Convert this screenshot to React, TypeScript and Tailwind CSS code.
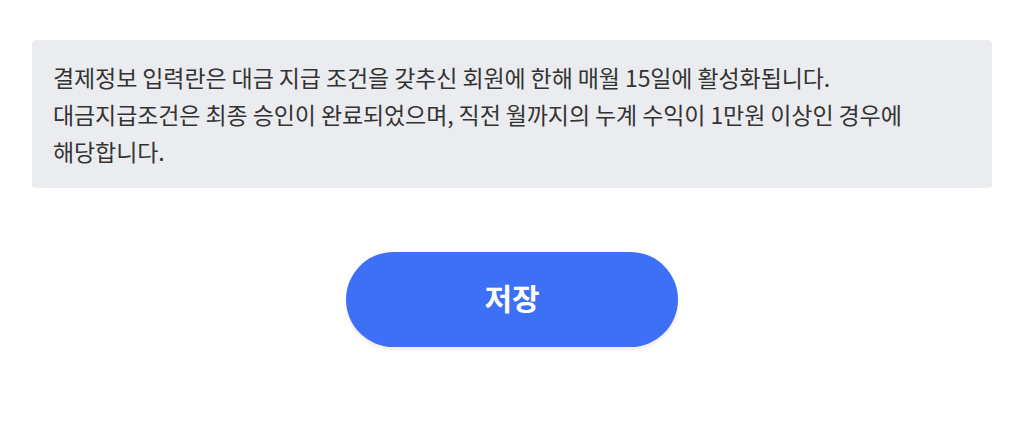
import React from 'react';

const font = { fontFamily: '"Noto Sans CJK KR", "Noto Sans", sans-serif' };

const PaymentNotice: React.FC = () => {
  return (
    <div className="w-[1032px] h-[426px] bg-white" style={font}>
      <div className="ml-8 mr-10 pt-10">
        <div className="rounded bg-[#ebecf0] pl-[21px] pr-5 pt-[19px] pb-[18px] text-[23px] leading-[37px] tracking-[-0.1px] text-[#333333]">
          <p>결제정보 입력란은 대금 지급 조건을 갖추신 회원에 한해 매월 15일에 활성화됩니다.</p>
          <p>
            대금지급조건은 최종 승인이 완료되었으며, 직전 월까지의 누계 수익이 1만원 이상인 경우에
            <br />
            해당합니다.
          </p>
        </div>

        <div className="flex justify-center pt-[64px]">
          <button className="h-[95px] w-[332px] rounded-full bg-[#3e70f7] pb-1 text-[30px] font-bold text-white shadow-[0_3px_3px_rgba(0,0,0,0.07)]">
            저장
          </button>
        </div>
      </div>
    </div>
  );
};

export default PaymentNotice;
